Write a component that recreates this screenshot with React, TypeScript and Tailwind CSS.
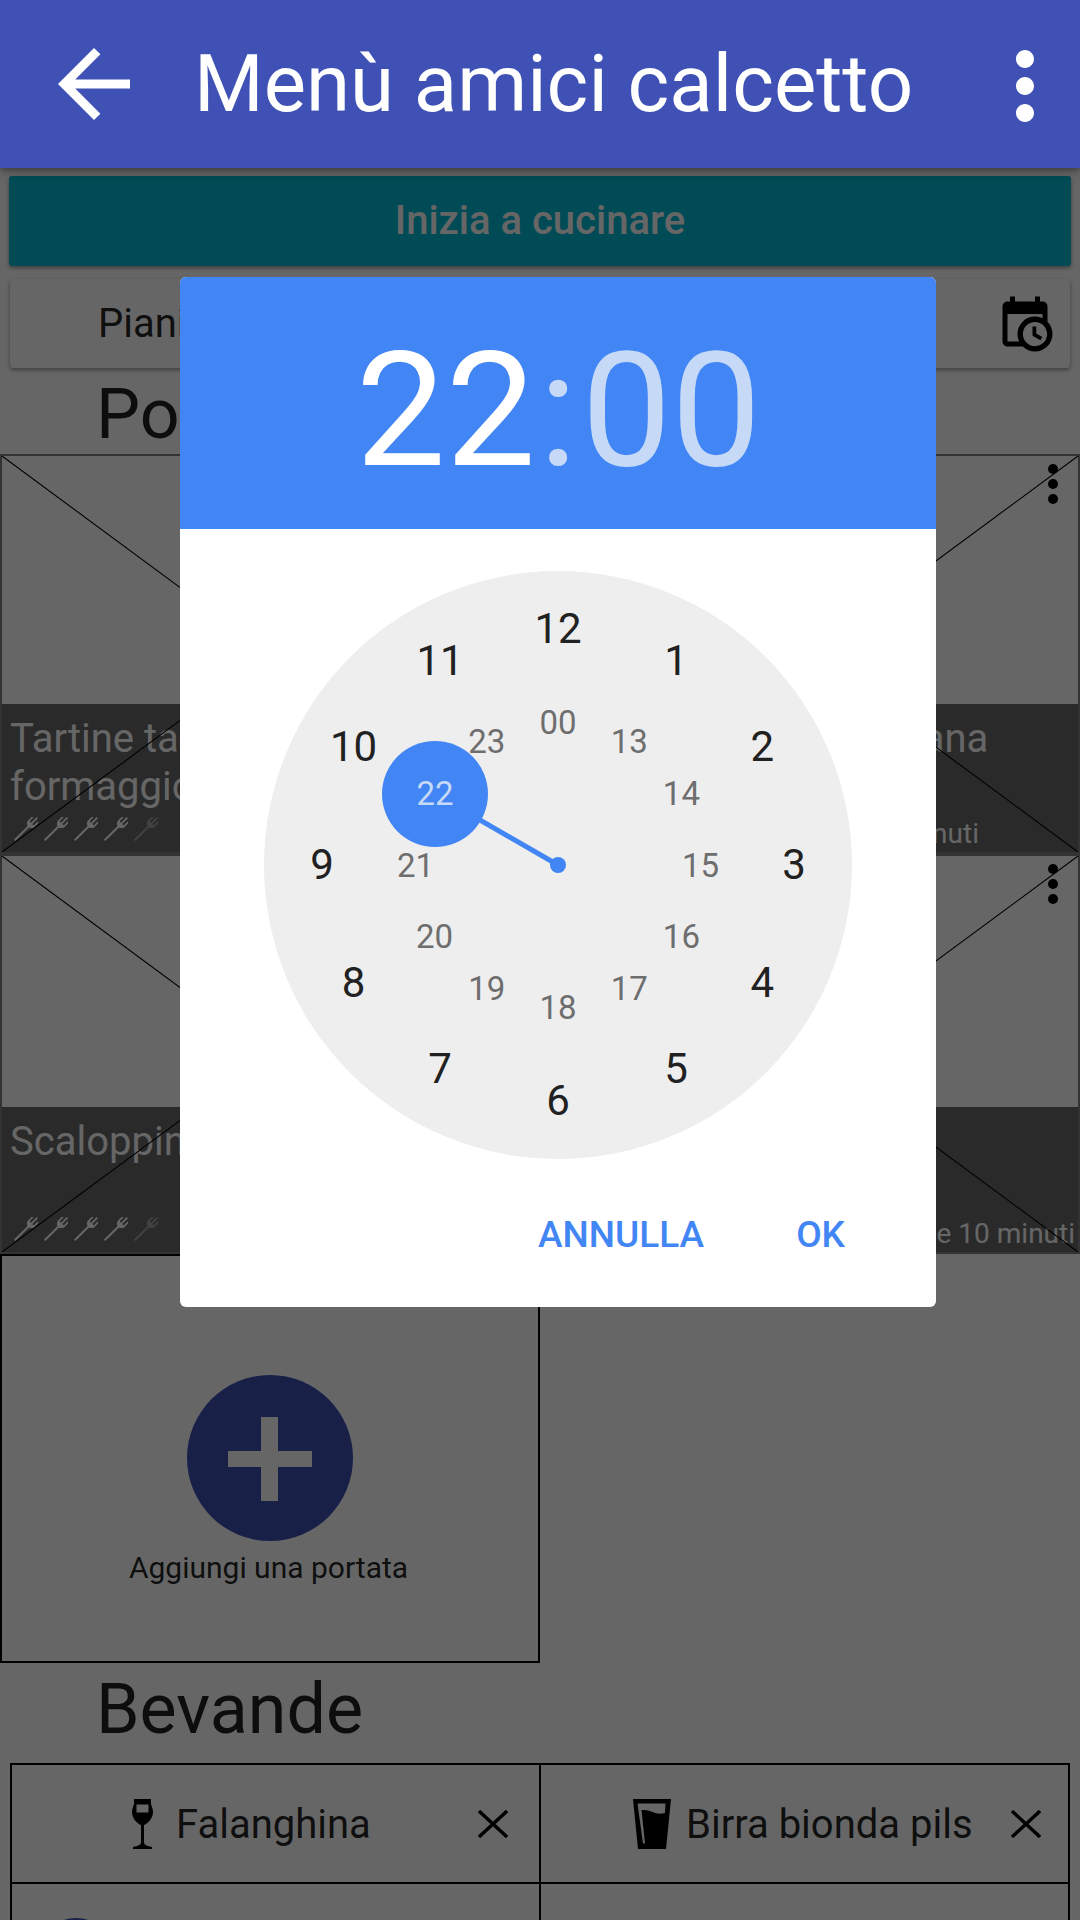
const HOURS = [12, 1, 2, 3, 4, 5, 6, 7, 8, 9, 10, 11];
const INNER = ["00", "13", "14", "15", "16", "17", "18", "19", "20", "21", "", "23"];

function Fork({ dim = false }: { dim?: boolean }) {
  return (
    <svg viewBox="0 0 24 24" className={`h-[24px] w-[24px] shrink-0 fill-white ${dim ? "opacity-40" : ""}`}>
      <g transform="rotate(45 12 12)">
        <path d="M11 8h2v20h-2zM7.4 -4h1.7v8h2V-4h1.8v8h2V-4h1.7v8.5c0 2-1.5 3.5-3.6 4.5h-2c-2.1-1-3.6-2.5-3.6-4.5z" />
      </g>
    </svg>
  );
}

function Forks() {
  return (
    <div className="flex shrink-0 gap-[6px] pl-[12px]">
      <Fork />
      <Fork />
      <Fork />
      <Fork />
      <Fork dim />
    </div>
  );
}

function Dish({
  title,
  time,
  band = "h-[148px]",
  timeGap = "pr-[3px]",
}: {
  title: string;
  time?: string;
  band?: string;
  timeGap?: string;
}) {
  return (
    <div className="relative flex h-[400px] flex-col justify-end border-2 border-black/50">
      <div className={`flex flex-col justify-between bg-[#696969] pb-[2px] text-white ${band}`}>
        <div className="whitespace-pre-line pl-[8px] pt-[11px] text-[40px] leading-[48px]">{title}</div>
        <div className={`flex items-center justify-between pb-[9px] ${timeGap}`}>
          <Forks />
          {time && <span className="translate-y-[5px] whitespace-nowrap text-[28px] leading-[24px]">{time}</span>}
        </div>
      </div>
      <svg viewBox="0 0 540 400" preserveAspectRatio="none" className="absolute inset-0 h-full w-full">
        <path d="M0 0L540 400M0 400L540 0" stroke="#000" strokeWidth="1.1" />
      </svg>
      <div className="absolute right-[20px] top-[8px] flex flex-col gap-[5px]">
        <span className="h-[10px] w-[10px] rounded-full bg-black" />
        <span className="h-[10px] w-[10px] rounded-full bg-black" />
        <span className="h-[10px] w-[10px] rounded-full bg-black" />
      </div>
    </div>
  );
}

function Close() {
  return (
    <svg viewBox="0 0 30 28" className="h-[28px] w-[30px] shrink-0" stroke="#000" strokeWidth="3.4" fill="none">
      <path d="M1 1L29 27M29 1L1 27" />
    </svg>
  );
}

function Dial() {
  return (
    <div className="relative mx-auto h-[588px] w-[588px] rounded-full bg-[#eeeeee]">
      {/* hand and selection */}
      <svg viewBox="0 0 588 588" className="absolute inset-0">
        <line x1="294" y1="294" x2="171" y2="223" stroke="#4285f4" strokeWidth="5" />
        <circle cx="294" cy="294" r="8" fill="#4285f4" />
        <circle cx="171" cy="223" r="53" fill="#4285f4" />
      </svg>
      {HOURS.map((h, i) => {
        const a = (i * Math.PI) / 6;
        return (
          <span
            key={h}
            className="absolute -translate-x-1/2 -translate-y-1/2 text-[42px] leading-none text-[#212121]"
            style={{ left: 294 + 236 * Math.sin(a), top: 294 - 236 * Math.cos(a) }}
          >
            {h}
          </span>
        );
      })}
      {INNER.map((h, i) => {
        const a = (i * Math.PI) / 6;
        return (
          <span
            key={i}
            className="absolute -translate-x-1/2 -translate-y-1/2 text-[33px] leading-none text-[#6e6e6e]"
            style={{ left: 294 + 142.5 * Math.sin(a), top: 293.5 - 142.5 * Math.cos(a) }}
          >
            {h}
          </span>
        );
      })}
      <span className="absolute left-[171px] top-[222px] -translate-x-1/2 -translate-y-1/2 text-[33px] leading-none text-[#c6daf8]">
        22
      </span>
    </div>
  );
}

export default function App() {
  return (
    <div className="relative h-[1920px] w-[1080px] overflow-hidden bg-white font-['Roboto',sans-serif] text-black/87">
      <header className="relative z-20 flex h-[168px] items-center bg-[#3f51b5] text-white shadow-[0_2px_8px_rgba(0,0,0,0.5)]">
        <svg viewBox="0 0 24 24" className="ml-[40px] h-[108px] w-[108px] fill-white">
          <path d="M20 11H7.83l5.59-5.59L12 4l-8 8 8 8 1.41-1.41L7.83 13H20v-2z" />
        </svg>
        <h1 className="ml-[46px] flex-1 whitespace-nowrap text-[79.8px] leading-none">Menù amici calcetto</h1>
        <svg viewBox="0 0 24 24" className="mr-[1px] mt-[3px] h-[108px] w-[108px] fill-white">
          <path d="M12 8c1.1 0 2-.9 2-2s-.9-2-2-2-2 .9-2 2 .9 2 2 2zm0 2c-1.1 0-2 .9-2 2s.9 2 2 2 2-.9 2-2-.9-2-2-2zm0 6c-1.1 0-2 .9-2 2s.9 2 2 2 2-.9 2-2-.9-2-2-2z" />
        </svg>
      </header>

      <main>
        <div className="mx-[9px] mt-[8px] flex h-[90px] items-center justify-center rounded-[3px] bg-[#00bcd4] text-[40px] font-medium text-white shadow-[0_2px_4px_rgba(0,0,0,0.4)]">
          Inizia a cucinare
        </div>
        <div className="mx-[10px] mt-[13px] flex h-[89px] items-center justify-between rounded-[3px] bg-white pl-[88px] pr-[15px] shadow-[0_2px_4px_rgba(0,0,0,0.4)]">
          <span className="text-[40px]">Pianifica</span>
          <svg viewBox="0 0 24 24" className="h-[60px] w-[60px]">
            <path d="M15,13H16.5V15.82L18.94,17.23L18.19,18.53L15,16.69V13M19,8H5V19H9.67C9.24,18.09 9,17.07 9,16A7,7 0 0,1 16,9C17.07,9 18.09,9.24 19,9.67V8M5,21C3.89,21 3,20.1 3,19V5C3,3.89 3.89,3 5,3H6V1H8V3H16V1H18V3H19A2,2 0 0,1 21,5V11.1C22.24,12.36 23,14.09 23,16A7,7 0 0,1 16,23C14.09,23 12.36,22.24 11.1,21H5M16,11.15A4.85,4.85 0 0,0 11.15,16C11.15,18.68 13.32,20.85 16,20.85A4.85,4.85 0 0,0 20.85,16C20.85,13.32 18.68,11.15 16,11.15Z" />
          </svg>
        </div>

        <h2 className="h-[86px] pl-[96px] pt-[6px] text-[70px] leading-[80px]">Portate</h2>
        <div className="grid grid-cols-2">
          <Dish title={"Tartine tartufo e\nformaggio fresco"} />
          <Dish title="Bucatini alla amatriciana" time="Cuoce 5 minuti" timeGap="pr-[99px]" />
          <Dish title="Scaloppine al limone" band="h-[145px]" />
          <Dish title="Insalata" time="Cuoce 10 minuti" band="h-[145px]" />
          <div className="flex h-[409px] flex-col items-center border-2 border-black pt-[119px]">
            <div className="relative h-[166px] w-[166px] rounded-full bg-[#3f51b5]">
              <span className="absolute left-[41px] top-[76px] h-[16px] w-[84px] bg-white" />
              <span className="absolute left-[74px] top-[42px] h-[84px] w-[17px] bg-white" />
            </div>
            <span className="mr-[3px] mt-[7px] text-[30px] leading-[40px]">Aggiungi una portata</span>
          </div>
        </div>

        <h2 className="h-[100px] pl-[96px] pt-[6px] text-[70px] leading-[80px]">Bevande</h2>
        <div className="mx-[10px] grid grid-cols-2 border-l-2 border-t-2 border-black">
          <div className="flex h-[119px] items-center border-b-2 border-r-2 border-black pl-[120px] pr-[31px]">
            <svg viewBox="0 0 21 50" className="h-[50px] w-[21px] shrink-0 fill-black">
              <path
                fillRule="evenodd"
                d="M2 0H19V5C19 6 21 9 21 13C21 20 15 25 12 26V43C12 46 15 47 20 48V50H1V48C6 47 9 46 9 43V26C6 25 0 20 0 13C0 9 2 6 2 5ZM4.5 5.5V13.5H16.5V5.5Z"
              />
            </svg>
            <span className="ml-[23px] flex-1 pt-[2px] text-[40px]">Falanghina</span>
            <Close />
          </div>
          <div className="flex h-[119px] items-center border-b-2 border-r-2 border-black pl-[92px] pr-[27px]">
            <svg viewBox="0 0 38 50" className="h-[50px] w-[38px] shrink-0 fill-black">
              <path
                fillRule="evenodd"
                d="M0 0H38L33 50H5ZM4.5 4.5L10 44.5H12L8.5 11C13 10.5 18 12 21 13.5C24 15 28 15 32 14L32.5 4.5Z"
              />
            </svg>
            <span className="ml-[15px] flex-1 whitespace-nowrap pt-[2px] text-[40px]">Birra bionda pils</span>
            <Close />
          </div>
          <div className="h-[140px] border-r-2 border-black pl-[24px] pt-[34px]">
            <div className="h-[80px] w-[80px] rounded-full bg-[#3f51b5]" />
          </div>
          <div className="h-[140px] border-r-2 border-black" />
        </div>
      </main>

      {/* scrim under the toolbar */}
      <div className="absolute inset-0 z-10 bg-black/60" />

      {/* time picker dialog */}
      <div className="absolute left-[180px] top-[277px] z-30 h-[1030px] w-[756px] overflow-hidden rounded-[6px] bg-white">
        <div className="grid h-[252px] grid-cols-[1fr_auto_1fr] items-center bg-[#4285f4] pt-[16px] text-[160px] font-normal leading-none">
          <span className="pr-[3px] text-right text-white">22</span>
          <span className="text-[#c6daf8]">:</span>
          <span className="pl-[4px] text-[#c6daf8]">00</span>
        </div>
        <div className="pt-[42px]">
          <Dial />
        </div>
        <div className="mt-[55px] flex justify-end gap-[92px] pr-[91px] text-[37px] font-medium leading-[42px] text-[#4285f4]">
          <span>ANNULLA</span>
          <span>OK</span>
        </div>
      </div>
    </div>
  );
}
